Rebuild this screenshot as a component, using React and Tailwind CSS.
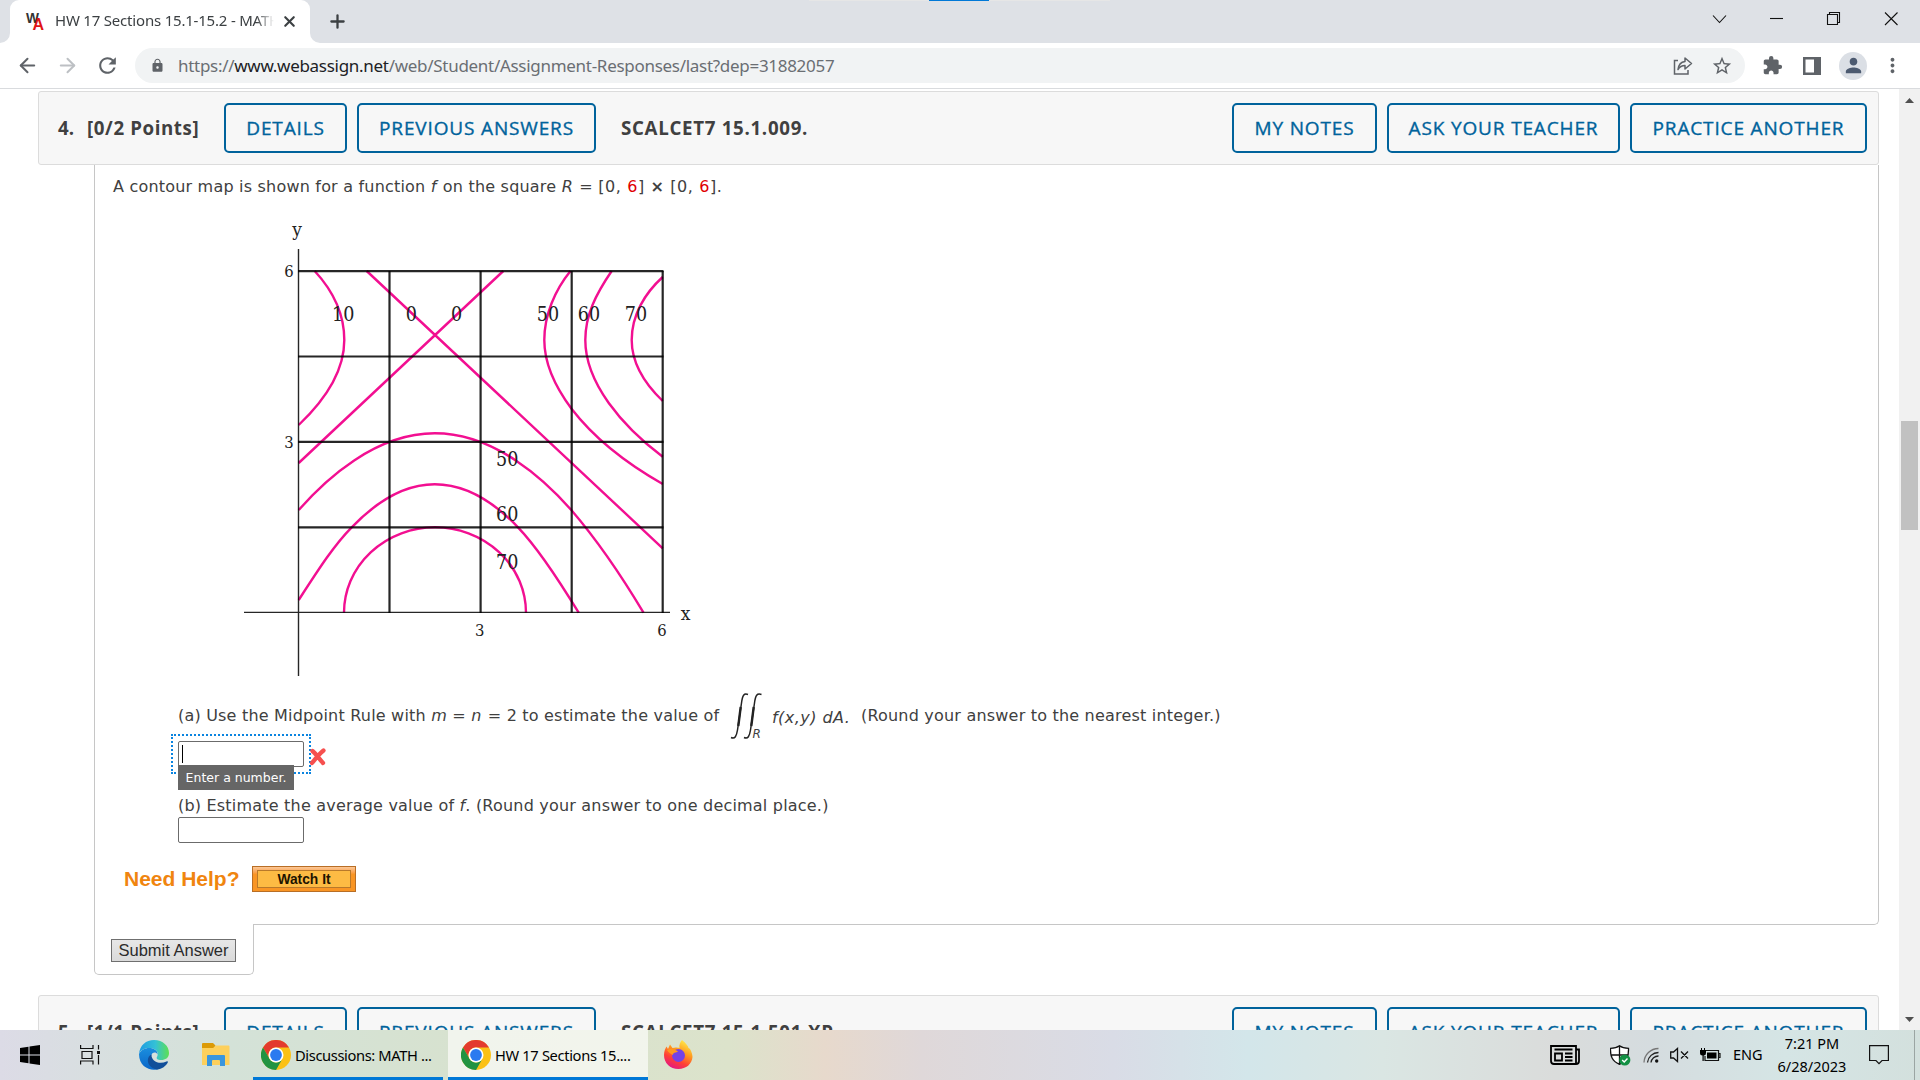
import { ArrowLeft, ArrowRight, Plus, X } from 'lucide-react';
import { MdRefresh, MdLock, MdStarBorder, MdExtension, MdPerson, MdMoreVert } from 'react-icons/md';

const btn = 'flex h-[50px] items-center justify-center rounded-[5px] border-2 border-[#00639c] text-[19px] tracking-[0.85px] [-webkit-text-stroke:0.35px] text-[#00639c] whitespace-nowrap';

function Chrome() {
  return (
    <svg width="30" height="30" viewBox="0 0 30 30" className="shrink-0">
      <circle cx="15" cy="15" r="15" fill="#fbc116" />
      <path d="M2 7.5A15 15 0 0 1 28 7.5H15A7.5 7.5 0 0 0 8.5 18.8Z" fill="#e33b2e" />
      <path d="M2 7.5A15 15 0 0 0 15 30L21.5 18.8A7.5 7.5 0 0 1 8.5 18.8Z" fill="#229342" />
      <circle cx="15" cy="15" r="7.5" fill="#fff" />
      <circle cx="15" cy="15" r="5.9" fill="#2a7af0" />
    </svg>
  );
}

function TitleBar() {
  return (
    <div className="relative flex h-[43px] bg-[#dee1e6] pl-[10px]">
      <div className="absolute left-[809px] top-0 h-px w-[301px] bg-[#e6e6e6]" />
      <div className="absolute left-[929px] top-0 h-px w-[60px] bg-[#0078d7]" />
      {/* Active tab */}
      <div className="relative flex h-full w-[300px] items-center rounded-t-[9px] bg-white pl-4">
        <svg width="10" height="10" className="absolute -left-[10px] bottom-0"><path d="M10 0V10H0A10 10 0 0 0 10 0Z" fill="#fff" /></svg>
        <svg width="10" height="10" className="absolute -right-[10px] bottom-0"><path d="M0 0V10H10A10 10 0 0 1 0 0Z" fill="#fff" /></svg>
        <svg width="18" height="20" viewBox="0 0 18 20" className="mt-[-2px] shrink-0 overflow-visible">
          <text x="0" y="12" fontFamily="Liberation Sans" fontWeight="700" fontSize="15" textLength="13" lengthAdjust="spacingAndGlyphs" fill="#333">W</text>
          <text x="6.5" y="18.5" fontFamily="Liberation Sans" fontWeight="700" fontSize="16" fill="#e01515">A</text>
        </svg>
        <div className="ml-[11px] mt-[-2px] w-[219px] overflow-hidden whitespace-nowrap text-[15px] tracking-[-0.2px] text-[#3c4043] [mask-image:linear-gradient(to_right,black_92%,transparent)]">HW 17 Sections 15.1-15.2 - MATH</div>
        <X size={17} strokeWidth={3} className="ml-[7px] shrink-0 text-[#3c4043]" />
      </div>
      <Plus size={21} strokeWidth={2.6} className="ml-[17px] mt-[11px] text-[#3c4043]" />
      <svg width="190" height="20" viewBox="1710 9 190 20" className="ml-auto mr-[20px] mt-[9px]" fill="none" stroke="#111" strokeWidth="1.1">
        <path d="M1713 15.5L1719.500 22.5L1726 15.5" />
        <path d="M1770 18.500H1783" />
        <path d="M1827.500 14.500H1837.500V24.500H1827.500ZM1829.500 14.500V12.500H1839.500V22.500H1837.500" />
        <path d="M1885 12.500L1897.500 25M1897.500 12.500L1885 25" />
      </svg>
    </div>
  );
}

function Toolbar() {
  return (
    <div className="flex h-[46px] items-start border-b border-[#d9dbde] bg-white pt-[5px] text-[#5f6368]">
      <div className="flex h-[35px] w-[135px] items-center">
        <ArrowLeft size={23} strokeWidth={2.1} className="ml-4" />
        <ArrowRight size={23} strokeWidth={2.1} className="ml-[17px] text-[#bdc0c4]" />
        <MdRefresh size={25} className="ml-[16px]" />
      </div>
      <div className="flex h-[35px] w-[1610px] items-center rounded-full bg-[#f1f3f4] pl-[15px]">
        <MdLock size={15} />
        <div className="ml-[13px] whitespace-nowrap text-[17px] tracking-[-0.29px] text-[#6a6e73]">
          https://<span className="text-[#202124]">www.webassign.net</span>/web/Student/Assignment-Responses/last?dep=31882057
        </div>
        <svg width="20" height="20" viewBox="0 0 20 20" className="ml-auto mr-[18px]" fill="none" stroke="#5f6368" strokeWidth="1.5">
          <path d="M5 4.500H1.500V18H15V14" />
          <path d="M12 2L18.500 7.500L12 13V9.500C8.500 9.500 6.500 11 5 13.500C5.500 9 8 6 12 5.500Z" strokeLinejoin="round" />
        </svg>
        <MdStarBorder size={22} className="mr-[12px]" />
      </div>
      <div className="flex h-[35px] items-center">
        <MdExtension size={21} className="ml-[17px]" />
        <svg width="18" height="18" viewBox="0 0 18 18" className="ml-[20px]"><path d="M0 0H18V18H0ZM2.500 2.500V15.500H11V2.500Z" fill="#5f6368" fillRule="evenodd" /></svg>
        <div className="ml-[18px] flex size-[28px] items-center justify-center rounded-full bg-[#dbdfe5] text-[#4c5a70]"><MdPerson size={23} /></div>
        <MdMoreVert size={23} className="ml-[14px]" />
      </div>
    </div>
  );
}

function QuestionHeader({ num, points, name }) {
  return (
    <div className="ml-[38px] flex h-[74px] w-[1841px] shrink-0 rounded-[3px] border border-[#dcdcdc] bg-[#f7f7f7] pt-[11px] font-['Open_Sans']">
      <div className="flex h-[50px] w-[185px] items-center pl-[19px] text-[18.7px] font-bold text-[#404040] whitespace-nowrap">
        <span className="w-[29px]">{num}</span>
        <span className="tracking-[0.6px]">{points}</span>
      </div>
      <div className={`${btn} w-[123px]`}>DETAILS</div>
      <div className={`${btn} ml-[10px] w-[239px]`}>PREVIOUS ANSWERS</div>
      <div className="ml-[25px] flex h-[50px] items-center text-[18.7px] font-bold tracking-[0.7px] text-[#404040]">{name}</div>
      <div className="ml-auto mr-[11px] flex gap-[10px]">
        <div className={`${btn} w-[145px]`}>MY NOTES</div>
        <div className={`${btn} w-[233px]`}>ASK YOUR TEACHER</div>
        <div className={`${btn} w-[237px]`}>PRACTICE ANOTHER</div>
      </div>
    </div>
  );
}

const labels = [
  [343.2, 321, '10'], [411.3, 321, '0'], [456.7, 321, '0'], [548, 321, '50'], [589, 321, '60'], [636, 321, '70'],
  [507.2, 466, '50'], [507.2, 521, '60'], [507.2, 568.7, '70'],
];
const axis = [[289, 277, '6'], [289, 448.3, '3'], [479.7, 636.3, '3'], [662, 636.3, '6']];

function ContourMap() {
  return (
    <svg width="480" height="460" viewBox="240 220 480 460" className="ml-[145px] mt-[21px] shrink-0 font-['DejaVu_Serif_Condensed','DejaVu_Serif',serif] tracking-normal" textAnchor="middle" fill="#222">
      <g fill="none" stroke="#f20f91" strokeWidth="2.4">
        <path d="M314.700 271C335 293 344.300 316 344.300 340C344.300 371 324 401 298.700 425" />
        <path d="M366.700 271L662.700 548.300M503.300 271L298.700 463" />
        <path d="M298.700 510C325 480 375 433.300 434.700 433.300C495 433.300 545 480 571.300 510C603 547 624 580 643.500 612.700" />
        <path d="M298.700 600C320 567 335 544 351.700 527.300C380 498 408 484.300 434.700 484.300C461 484.300 490 498 518 527.300C536 546 560 582 578.700 612.700" />
        <path d="M344 612.700A91 85.400 0 0 1 526 612.700" />
        <path d="M570.500 271C555 290 544.300 315 544.300 340C544.300 365 556 388 571.700 409C594 438 624 462 662.700 484" />
        <path d="M611.700 271C596 294 585.300 315 585.300 340C585.300 383 622 426 662.700 456.700" />
        <path d="M662.700 277C645 293 631.700 315 631.700 340C631.700 363 645 384 662.700 401" />
      </g>
      <g stroke="#000" strokeOpacity="0.85" strokeWidth="2.2">
        <path d="M298 271.200H663.500M298 356.500H663.500M298 441.800H663.500M298 527.300H663.500" />
        <path d="M389.500 271V613M480.600 271V613M571.700 271V613M662.700 271V613" />
        <path d="M298.500 249V676M244 612.400H670" strokeWidth="1.4" />
      </g>
      {labels.map(([x, y, t]) => <text key={`${x}-${y}`} x={x} y={y} fontSize="19.5">{t}</text>)}
      {axis.map(([x, y, t]) => <text key={`${x}-${y}`} x={x} y={y} fontSize="16.5">{t}</text>)}
      <text x="297" y="235.500" fontSize="19">y</text>
      <text x="685.500" y="619.500" fontSize="19">x</text>
    </svg>
  );
}

function Question() {
  return (
    <>
      <div className="ml-[94px] flex h-[760px] w-[1785px] shrink-0 flex-col rounded-br-[5px] border-x border-b border-[#c6c6c6] font-['DejaVu_Sans'] text-[16px] tracking-[0.2px] text-[#404040]">
        <p className="ml-[18px] mt-[10px] h-6 leading-6 whitespace-nowrap">
          A contour map is shown for a function <i className="mr-px">f</i> on the square <i className="mr-px">R</i> = <span className="tracking-[0.6px]">[0, <span className="text-[#e00000]">6</span>] <b>×</b> [0, <span className="text-[#e00000]">6</span>].</span>
        </p>
        <ContourMap />

        {/* Part a */}
        <div className="ml-[83px] mt-[10px] flex h-[52px] shrink-0 items-center whitespace-nowrap">
          <span className="w-[552px]">(a) Use the Midpoint Rule with <i>m</i> = <i className="mr-px">n</i> = 2 to estimate the value of</span>
          <svg width="34" height="50" viewBox="730 691 34 50" fill="none" stroke="#222">
            <path d="M731 737.500C735 739.500 736.500 736 737.500 730L741.500 703C742.500 695 744 693 748 694.500" strokeWidth="1.5" />
            <path d="M744 737.500C748 739.500 749.500 736 750.500 730L754.500 703C755.500 695 757 693 761.500 694.500" strokeWidth="1.5" />
            <path d="M738.300 726L740.700 707M751.300 726L753.700 707" strokeWidth="2.4" />
            <text x="752.500" y="737.800" fontSize="12" fontStyle="italic" fill="#404040" stroke="none">R</text>
          </svg>
          <i className="ml-[8px] mt-[4px] w-[89px] tracking-[0.45px]">f(x,y) dA.</i>
          <span>(Round your answer to the nearest integer.)</span>
        </div>
        <div className="relative -mt-[8px] ml-[76px] flex h-[40px] w-[140px] shrink-0 border-2 border-dotted border-[#0a84e0] pl-[5px] pt-[5px]">
          <div className="flex h-[26px] w-[126px] items-center rounded-[2px] border border-[#6b6b6b] bg-white pl-[3px]"><span className="h-[18px] w-px bg-black" /></div>
          <svg width="18" height="18" viewBox="0 0 18 18" className="absolute left-[136px] top-[12px]"><path d="M3.500 3C7 6 10 10.500 14 15M14.500 2.500C10 6 7 10 3 15" stroke="#f6504f" strokeWidth="4.300" strokeLinecap="round" fill="none" /></svg>
          <div className="absolute left-[5px] top-[29px] flex h-[25px] w-[116px] items-center justify-center bg-[#666] pt-px text-[12.500px] tracking-normal text-white whitespace-nowrap">Enter a number.</div>
        </div>

        {/* Part b */}
        <p className="ml-[83px] mt-[20px] h-6 shrink-0 leading-6 whitespace-nowrap">(b) Estimate the average value of <i>f</i>. (Round your answer to one decimal place.)</p>
        <div className="-mt-px ml-[83px] h-[26px] w-[126px] shrink-0 rounded-[2px] border border-[#6b6b6b]" />

        <div className="ml-[28px] mt-[22px] flex h-[28px] shrink-0 items-center font-['Liberation_Sans'] font-bold tracking-normal">
          <span className="w-[129px] pl-px text-[21px] text-[#f0850f] whitespace-nowrap">Need Help?</span>
          <div className="h-[26px] w-[104px] border border-[#b86e25] bg-linear-to-b from-[#fcc795] to-[#f99524] to-30% px-1 py-[3px]">
            <div className="flex h-full items-center justify-center border border-[#b9792a] bg-[#fdbb44] pt-[2px] text-[13.8px] leading-none text-[#1d1400]">Watch It</div>
          </div>
        </div>
      </div>
      <div className="relative z-10 -mt-px ml-[94px] h-[51px] w-[160px] shrink-0 rounded-b-[5px] border-x border-b border-[#c6c6c6] bg-white pl-4 pt-[15px]">
        <div className="flex h-[23px] w-[125px] items-center justify-center border border-[#6f6f6f] bg-linear-to-b from-[#e7e7e7] to-[#dadada] font-['Liberation_Sans'] text-[16.5px] text-[#2b2b2b] whitespace-nowrap">Submit Answer</div>
      </div>
    </>
  );
}

function Taskbar() {
  return (
    <div className="flex h-[50px] bg-[linear-gradient(90deg,#dcdbe6_0%,#d8dfe0_5%,#d4e2d8_12%,#d7e2cf_24%,#dce3cb_38%,#e7d9cc_43%,#dfd8d9_48%,#d9dce6_58%,#d3e6ea_65%,#dae6e3_72%,#dadcdb_81%,#d5dcdf_86%,#d5e5e5_93%,#d3e0dd_100%)] text-black">
      <div className="flex items-center">
        <svg width="20" height="20" viewBox="0 0 20 20" className="ml-5"><path d="M0 3L8.500 1.800V9.500H0ZM9.500 1.600L20 0V9.500H9.500ZM0 10.500H8.500V18.200L0 17ZM9.500 10.500H20V20L9.500 18.400Z" /></svg>
        <svg width="21" height="20" viewBox="0 0 21 20" className="ml-10" fill="none" stroke="#111" strokeWidth="1.200"><path d="M.6 0V3.500H13V0M.6 19.500V16H13V19.500M2 6.500H12V13.500H2ZM18.500 0V4.500M18.500 10V19.500" /><path d="M17 6H20V9H17Z" fill="#111" stroke="none" /></svg>
        <svg width="30" height="30" viewBox="0 0 30 30" className="ml-[38px]">
          <defs>
            <linearGradient id="edgeTop"><stop offset="0" stopColor="#1e9be2" /><stop offset=".55" stopColor="#34c1d6" /><stop offset="1" stopColor="#5ee052" /></linearGradient>
            <linearGradient id="edgeLow" x1="0" y1="0" x2="0" y2="1"><stop offset="0" stopColor="#1a8ede" /><stop offset="1" stopColor="#0b66c8" /></linearGradient>
          </defs>
          <path d="M0 14C1 5 7 0 15 0C24 0 30 6 30 13C30 18 26 20 22.500 20C18 20 17 18.500 18 17C21 11 15 8 10 8C5 8 1.500 10.500 0 14Z" fill="url(#edgeTop)" />
          <path d="M0 14C2 10 6 8 10 8C15 8 19 11 18.500 14.500C17 11.500 13 12 12 16C11 21 15 27 21 28.500C13 32 0 28 0 14Z" fill="url(#edgeLow)" />
          <path d="M12.500 14.500C7 17 7 27 18 29.500C23 29 27 26 28.800 22.500C29 21.500 28.500 21 27.500 21.500C20 25 12 21 12.500 14.500Z" fill="#124f9a" />
        </svg>
        <svg width="28" height="24" viewBox="0 0 28 24" className="ml-[33px]"><path d="M0 1Q0 0 1 0H11L13.500 2.500L12 5H0Z" fill="#dc9a06" /><path d="M0 5H11L14 2.500H26.500Q27.500 2.500 27.500 3.500V22H0Z" fill="#fdd05c" /><path d="M5 23V13Q5 12 6 12H22Q23 12 23 13V23H18V18Q18 17 17 17H11Q10 17 10 18V23Z" fill="#3a96dd" /></svg>
      </div>
      <div className="ml-[23px] flex w-[190px] items-center border-b-[3px] border-[#0078d7] pl-2 pt-[3px]">
        <Chrome /><span className="ml-[4px] text-[14.700px] tracking-[-0.38px] whitespace-nowrap">Discussions: MATH ...</span>
      </div>
      <div className="ml-[5px] flex w-[200px] items-center border-b-[3px] border-[#0078d7] bg-[#f4f6f0]/90 pl-[13px] pt-[3px]">
        <Chrome /><span className="ml-[4px] text-[14.700px] tracking-[-0.35px] whitespace-nowrap">HW 17 Sections 15....</span>
      </div>
      <svg width="29" height="30" viewBox="0 0 29 30" className="ml-[16px] mt-[10px]">
        <defs>
          <linearGradient id="fox" x1=".8" y1="0" x2=".3" y2="1"><stop offset="0" stopColor="#fff44f" /><stop offset=".4" stopColor="#ff9a1e" /><stop offset=".7" stopColor="#ff4035" /><stop offset="1" stopColor="#e31587" /></linearGradient>
        </defs>
        <path d="M18 0C22 3 24 6 24.500 8C26 8 28.500 13 28.500 17C28 24 22 29 14.500 29C6 29 0 23 0 15C0 11 1.500 8 2.500 6.500L4 9L6 4.500L8.500 8C11 7 14 7.500 15.500 8C15 5 16 2 18 0Z" fill="url(#fox)" />
        <circle cx="14.500" cy="15.500" r="6.500" fill="#7542e5" />
        <path d="M3 10C7 8 11 9 14 11.500C12 13 9 12 9 15C7 14 5 13 3 10Z" fill="#ff9a1e" />
      </svg>

      {/* System tray */}
      <div className="ml-auto flex items-center text-[15px]">
        <svg width="30" height="20" viewBox="0 0 30 20" fill="none" stroke="#000" strokeWidth="1.800"><path d="M1 1H26V19H4Q1 19 1 16ZM26 4.500H29V16Q29 19 26 19M4.500 4.500H22.500M5 8.500H12V15.500H5ZM15 8.500H22.500M15 12H22.500M15 15.500H22.500" /></svg>
        <svg width="21" height="21" viewBox="0 0 21 21" className="ml-[30px]"><path d="M9.500 .7C12 2.700 15 3.300 18.500 3.300C18.800 11 17 16 9.500 19.300C2 16 .2 11 .5 3.300C4 3.300 7 2.700 9.500 .7ZM9.500 1V19M.8 10H18.300" fill="#fff" stroke="#111" strokeWidth="1.300" /><circle cx="14.800" cy="15" r="5.600" fill="#139044" /><path d="M12.200 15L14.200 17L17.500 13.500" stroke="#fff" strokeWidth="1.400" fill="none" /></svg>
        <svg width="17" height="17" viewBox="0 0 17 17" className="ml-[12px]" fill="none" stroke="#222" strokeWidth="1.300"><path d="M1 15.500A14.500 14.500 0 0 1 15.500 1.500" stroke="#777" /><path d="M4.500 15.500A11 11 0 0 1 15.500 5.500M8 15.500A7.500 7.500 0 0 1 15.500 9" /><circle cx="13.700" cy="14" r="1.700" fill="#111" stroke="none" /></svg>
        <svg width="20" height="16" viewBox="0 0 20 16" className="ml-[10px]" fill="none" stroke="#111" strokeWidth="1.300"><path d="M.7 5H3.500L7.500 1.500V14.500L3.500 11H.7ZM11 4.500L18 11.500M18 4.500L11 11.500" /></svg>
        <svg width="21" height="14" viewBox="0 0 21 14" className="ml-[10px]"><path d="M5 2.500H18.500V12.500H5V8M18.500 5.500H20V9.500H18.500" fill="none" stroke="#111" strokeWidth="1.200" /><path d="M7 4.500H16.500V10.500H7ZM0 2H6V5Q6 7.500 3.700 7.500V13H2.500V7.500Q0 7.500 0 5ZM1 0H2V2H1ZM4 0H5V2H4Z" /></svg>
        <span className="ml-[12px] w-[32px] text-[14.5px]">ENG</span>
        <div className="ml-[11px] w-[72px] text-center leading-[23px] text-[14.5px] whitespace-nowrap">7:21 PM<br />6/28/2023</div>
        <svg width="20" height="20" viewBox="0 0 20 20" className="ml-[21px]" fill="none" stroke="#111" strokeWidth="1.200"><path d="M.6 .6H19.400V15.500H13L10 18.700L7 15.500H.6Z" /></svg>
        <div className="ml-[25px] mr-[5px] h-[50px] w-px bg-[#9ba5a3]" />
      </div>
    </div>
  );
}

export default function App() {
  return (
    <div className="flex h-[1080px] w-[1920px] flex-col overflow-hidden bg-white font-['Noto_Sans']">
      <TitleBar />
      <Toolbar />
      <div className="flex h-[941px] overflow-hidden">
        <div className="flex w-[1899px] flex-col overflow-hidden pt-[2px]">
          <QuestionHeader num="4." points="[0/2 Points]" name="SCALCET7 15.1.009." />
          <Question />
          <div className="h-5 shrink-0" />
          <QuestionHeader num="5." points="[1/1 Points]" name="SCALCET7 15.1.501.XP." />
        </div>
        <div className="flex w-[21px] flex-col items-center bg-[#f1f1f1]">
          <svg width="10" height="6" className="mt-[9px]"><path d="M0 5L4.500 0L9 5Z" fill="#505050" /></svg>
          <div className="mt-[317px] h-[109px] w-[17px] bg-[#c1c1c1]" />
          <svg width="10" height="6" className="mb-[7px] mt-auto"><path d="M0 0L4.500 5L9 0Z" fill="#505050" /></svg>
        </div>
      </div>
      <Taskbar />
    </div>
  );
}
